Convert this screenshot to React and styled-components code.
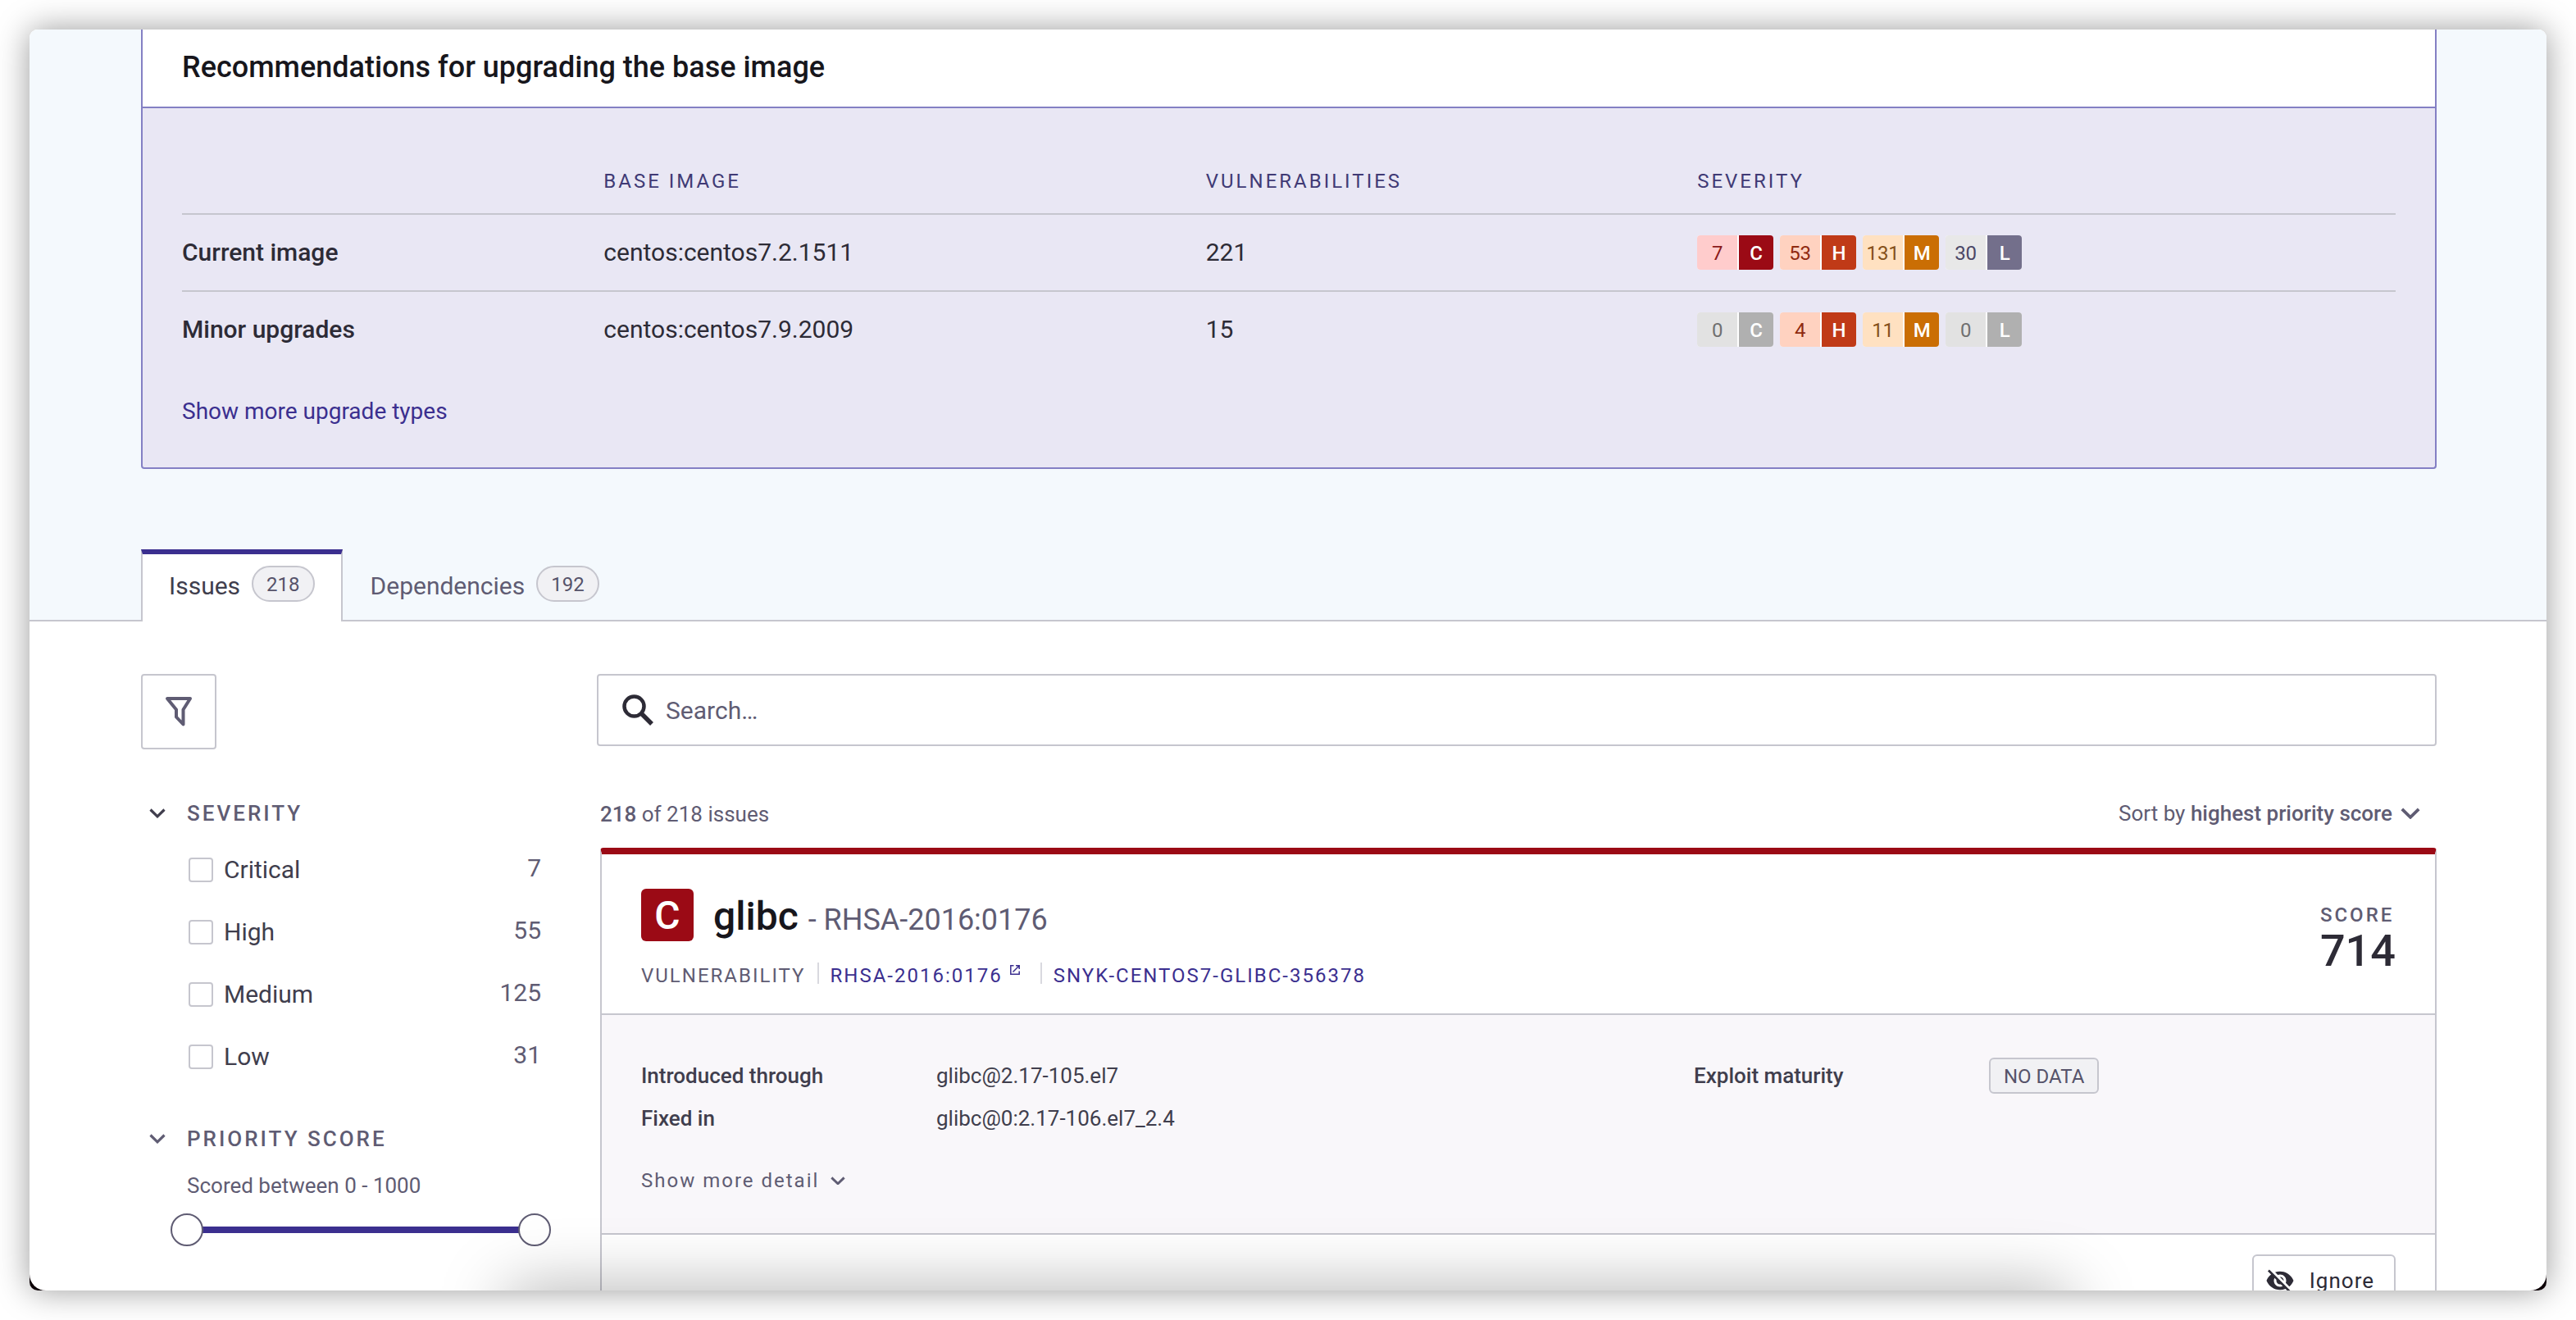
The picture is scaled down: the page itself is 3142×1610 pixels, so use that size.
import React, { useState } from "react";
import styled, { createGlobalStyle } from "styled-components";

const Global = createGlobalStyle`
  *, *::before, *::after { box-sizing: border-box; }
  body { margin: 0; background: #fff; font-family: Roboto, "Liberation Sans", sans-serif; color: #2d2b36; }
  button, input { font: inherit; color: inherit; }
  h1, h2, h3, p, dl, dd { margin: 0; }
`;

const line = "#c6c6ce";
const slate = "#5f5c73";
const violet = "#3b2f8f";

const Stage = styled.div`
  height: 100vh;
  padding: 36px;
  overflow: hidden;
`;

const Backing = styled.div`
  height: 100%;
  border-radius: 10px;
  background: linear-gradient(#f4f9fd 50%, #0d0207 50%);
  box-shadow: 0 0 40px rgba(0, 0, 0, 0.4);
`;

const Window = styled.div`
  position: relative;
  height: 100%;
  overflow: hidden;
  background: #fff;
  border-radius: 10px 10px 20px 20px;

  &::after {
    content: "";
    position: absolute;
    top: 100%;
    left: 19%;
    right: 19%;
    height: 60px;
    border-radius: 10px;
    box-shadow: 0 0 80px rgba(0, 0, 0, 0.34);
    pointer-events: none;
  }
`;

const Upper = styled.section`
  background: #f4f9fd;
  padding: 0 134px 0 136px;
`;

const Recommendation = styled.section`
  border: 2px solid #8480c4;
  border-top: 0;
  border-radius: 0 0 4px 4px;
  background: #e9e7f4;
`;

const RecTitle = styled.h2`
  padding: 24px 48px 26px;
  background: #fff;
  border-bottom: 2px solid #8480c4;
  color: #17161c;
  font-size: 36px;
  line-height: 44px;
  font-weight: 500;
`;

const RecBody = styled.div`
  padding: 78px 48px 46px;
`;

const Table = styled.table`
  width: 100%;
  table-layout: fixed;
  border-collapse: collapse;
  text-align: left;
  font-size: 30px;
  line-height: 44px;

  th, td { padding: 24px 0; }
  thead th {
    padding: 0 0 28px;
    color: #403a75;
    font-size: 24px;
    line-height: 22px;
    font-weight: 400;
    letter-spacing: 3px;
  }
  tbody tr { border-top: 2px solid ${line}; }
  tbody th { font-weight: 500; }
`;

const Col = styled.col`
  width: ${(p) => p.$w};
`;

const Badges = styled.div`
  display: flex;
  gap: 8px;
`;

const tones = {
  C: ["#ffcccc", "#8b1a1a", "#9b0a15"],
  H: ["#ffd2c0", "#8f2a10", "#c03a17"],
  M: ["#ffe1c1", "#84501a", "#ca6e04"],
  L: ["#e8e8e8", "#4b4766", "#736f8b"],
  none: ["#e2e2e2", "#707070", "#b0b0b0"],
};

const Badge = styled.span`
  display: grid;
  grid-template-columns: 49px 42px;
  gap: 2px;
  height: 42px;
  border-radius: 4px;
  overflow: hidden;
  background: #fff;
  font-size: 24px;
  line-height: 44px;
  text-align: center;

  span { background: ${(p) => tones[p.$tone][0]}; color: ${(p) => tones[p.$tone][1]}; }
  b { background: ${(p) => tones[p.$tone][2]}; color: #fff; font-weight: 500; }
`;

const MoreLink = styled.a`
  display: inline-block;
  margin-top: 32px;
  color: ${violet};
  font-size: 28px;
  line-height: 44px;
  text-decoration: none;
`;

const TabBar = styled.div`
  display: flex;
  margin: 98px -134px 0 -136px;
  padding-left: 136px;
  box-shadow: inset 0 -2px ${line};
`;

const Tab = styled.button`
  display: flex;
  align-items: center;
  gap: 14px;
  height: 88px;
  padding: 14px 32px 18px;
  border: 2px solid ${(p) => (p.$active ? line : "transparent")};
  border-top: 6px solid ${(p) => (p.$active ? violet : "transparent")};
  border-bottom: 0;
  background: ${(p) => (p.$active ? "#fff" : "transparent")};
  color: ${(p) => (p.$active ? "#403e4d" : slate)};
  font-size: 30px;
  line-height: 40px;
`;

const Pill = styled.span`
  align-self: flex-start;
  height: 44px;
  padding: 0 16px;
  border: 2px solid ${line};
  border-radius: 22px;
  background: #f1f1f4;
  color: #56536a;
  font-size: 24px;
  line-height: 42px;
`;

const Lower = styled.section`
  display: grid;
  grid-template-columns: 500px minmax(0, 1fr);
  column-gap: 56px;
  padding: 64px 134px 0 136px;
`;

const FilterButton = styled.button`
  display: grid;
  place-items: center;
  width: 92px;
  height: 92px;
  padding: 0;
  border: 2px solid ${line};
  border-radius: 4px;
  background: #fff;
`;

const Group = styled.section`
  margin-top: ${(p) => p.$top};
`;

const GroupTitle = styled.button`
  display: flex;
  align-items: center;
  gap: 26px;
  padding: 0 0 0 10px;
  border: 0;
  background: none;
  color: ${slate};
  font-size: 26px;
  line-height: 36px;
  font-weight: 500;
  letter-spacing: 3px;
`;

const Choices = styled.div`
  display: grid;
  gap: 36px;
  margin: 31px 0 0 58px;
  padding-right: 12px;
`;

const Choice = styled.label`
  display: flex;
  align-items: center;
  gap: 13px;
  color: #403e4d;
  font-size: 30px;
  line-height: 40px;
`;

const Count = styled.span`
  align-self: flex-start;
  margin-left: auto;
  color: ${slate};
  line-height: 36px;
`;

const Box = styled.input.attrs({ type: "checkbox" })`
  appearance: none;
  width: 30px;
  height: 30px;
  margin: 0;
  border: 2px solid ${line};
  border-radius: 4px;
  background: #fff;
  &:checked { background: ${violet}; }
`;

const Hint = styled.p`
  margin: 21px 0 16px 56px;
  color: ${slate};
  font-size: 26px;
  line-height: 36px;
`;

const Range = styled.div`
  display: grid;
  align-items: center;
  margin-left: 36px;
  height: 40px;

  &::before {
    content: "";
    grid-area: 1 / 1;
    height: 8px;
    margin: 0 20px;
    background: ${violet};
  }
`;

const Slider = styled.input.attrs({ type: "range", min: 0, max: 1000 })`
  grid-area: 1 / 1;
  appearance: none;
  width: 100%;
  height: 40px;
  margin: 0;
  background: none;
  pointer-events: none;

  &::-webkit-slider-thumb {
    appearance: none;
    width: 40px;
    height: 40px;
    border: 2px solid ${slate};
    border-radius: 50%;
    background: #fff;
    pointer-events: auto;
  }
`;

const SearchBox = styled.label`
  display: flex;
  align-items: center;
  gap: 14px;
  height: 88px;
  padding: 0 28px;
  border: 2px solid ${line};
  border-radius: 4px;
  background: #fff;
`;

const SearchInput = styled.input`
  flex: 1;
  min-width: 0;
  padding: 2px 0 0;
  border: 0;
  outline: 0;
  background: none;
  font-size: 30px;
  line-height: 40px;
  &::placeholder { color: ${slate}; opacity: 1; }
`;

const Results = styled.div`
  padding-left: 4px;
`;

const Summary = styled.div`
  display: flex;
  justify-content: space-between;
  align-items: center;
  height: 124px;
  padding: 42px 20px 0 0;
  color: ${slate};
  font-size: 26px;
  line-height: 36px;

  b { font-weight: 500; }
`;

const SortButton = styled.button`
  display: flex;
  align-items: center;
  gap: 10px;
  padding: 0 0 2px;
  border: 0;
  background: none;
  white-space: pre;
`;

const Issue = styled.article`
  border: 2px solid ${line};
  border-top: 8px solid #9b0a15;
  border-radius: 4px;
  background: #fff;
`;

const IssueHead = styled.header`
  display: flex;
  justify-content: space-between;
  height: 194px;
  padding: 42px 48px 0;
`;

const TitleRow = styled.div`
  display: flex;
  align-items: flex-start;
  gap: 24px;
  height: 64px;
`;

const SeverityMark = styled.span`
  width: 64px;
  height: 64px;
  border-radius: 6px;
  background: #9b0a15;
  color: #fff;
  font-size: 48px;
  line-height: 66px;
  font-weight: 500;
  text-align: center;
`;

const IssueTitle = styled.h3`
  color: #17161c;
  font-size: 48px;
  line-height: 68px;
  font-weight: 500;

  small { color: ${slate}; font-size: 36px; font-weight: 400; }
`;

const Refs = styled.div`
  display: flex;
  align-items: center;
  margin-top: 24px;
  color: ${slate};
  font-size: 24px;
  line-height: 36px;
  letter-spacing: 2px;
`;

const RefLink = styled.a`
  display: flex;
  gap: 8px;
  margin-left: 14px;
  padding-left: 16px;
  color: ${violet};
  text-decoration: none;
  background: linear-gradient(#d9d9df, #d9d9df) 0 2px / 2px 26px no-repeat;

  svg { margin: 4px 10px 0 0; }
`;

const Score = styled.div`
  padding-top: 18px;
  color: #2d2b36;
  font-size: 54px;
  line-height: 60px;
  font-weight: 500;

  span {
    display: block;
    color: ${slate};
    font-size: 24px;
    line-height: 28px;
    letter-spacing: 3px;
  }
`;

const Details = styled.div`
  border: solid ${line};
  border-width: 2px 0;
  background: #f9f7fa;
  padding: 48px 48px 0;
  height: 270px;
`;

const Facts = styled.dl`
  display: grid;
  grid-template-columns: 360px calc(60% - 360px) 360px minmax(0, 1fr);
  grid-auto-rows: 52px;
  align-items: center;
  color: #403e4d;
  font-size: 26px;
  line-height: 36px;

  dt { font-weight: 500; }
`;

const Tag = styled.span`
  display: block;
  width: fit-content;
  height: 44px;
  padding: 0 16px;
  border: 2px solid ${line};
  border-radius: 6px;
  background: #f1f1f4;
  color: #56536a;
  font-size: 24px;
  line-height: 42px;
`;

const DetailToggle = styled.button`
  display: flex;
  align-items: center;
  gap: 14px;
  margin-top: 32px;
  padding: 0;
  border: 0;
  background: none;
  color: ${slate};
  font-size: 24px;
  line-height: 36px;
  letter-spacing: 2px;
`;

const Actions = styled.footer`
  display: flex;
  justify-content: flex-end;
  padding: 24px 48px;
`;

const IgnoreButton = styled.button`
  display: flex;
  align-items: center;
  gap: 18px;
  height: 64px;
  padding: 0 24px 0 14px;
  border: 2px solid ${line};
  border-radius: 6px;
  background: #fff;
  color: #2d2b36;
  font-size: 26px;
  letter-spacing: 1px;
`;

const Chevron = ({ size = 20, color = "#403e4d" }) => (
  <svg width={size} height={size * 0.6} viewBox="0 0 20 12" fill="none" aria-hidden="true">
    <path d="M1.5 1.5 10 9.8l8.500-8.300" stroke={color} strokeWidth="3.200" />
  </svg>
);

const Funnel = () => (
  <svg width="34" height="38" viewBox="0 0 34 38" fill="none" aria-hidden="true">
    <path d="M3 3h28l-8.500 13.500v18l-8.500-9V16.500z" stroke={slate} strokeWidth="4" strokeLinejoin="round" />
  </svg>
);

const Magnifier = () => (
  <svg width="40" height="40" viewBox="0 0 40 40" fill="none" aria-hidden="true">
    <circle cx="15.500" cy="15.500" r="12" stroke="#2d2b36" strokeWidth="4.500" />
    <path d="m24.500 24.500 12.500 12.500" stroke="#2d2b36" strokeWidth="5.500" />
  </svg>
);

const External = () => (
  <svg width="14" height="14" viewBox="0 0 14 14" fill="none" stroke={violet} strokeWidth="1.500" aria-hidden="true">
    <path d="M5.500 1.800H1.800v10.400h10.400V8.500M8 1.800h4.200V6M12 2 4.500 9.500" />
  </svg>
);

const EyeOff = () => (
  <svg width="36" height="36" viewBox="0 0 24 24" fill="#2d2b36" aria-hidden="true">
    <path d="M12 7c2.760 0 5 2.240 5 5 0 .650-.130 1.260-.360 1.830l2.920 2.920c1.510-1.260 2.700-2.890 3.430-4.750-1.730-4.390-6-7.500-11-7.500-1.400 0-2.740.250-3.980.700l2.160 2.160C10.740 7.130 11.350 7 12 7zM2 4.270l2.280 2.280.460.460C3.080 8.300 1.780 10.020 1 12c1.730 4.390 6 7.500 11 7.500 1.550 0 3.030-.300 4.380-.840l.420.420L19.730 22 21 20.730 3.270 3 2 4.270zM7.530 9.800l1.550 1.550c-.050.210-.080.430-.080.650 0 1.660 1.340 3 3 3 .220 0 .440-.030.650-.080l1.550 1.550c-.670.330-1.410.530-2.200.530-2.760 0-5-2.240-5-5 0-.790.200-1.530.530-2.200zm4.310-.780 3.150 3.150.020-.160c0-1.660-1.340-3-3-3l-.170.010z" />
  </svg>
);

const images = [
  { name: "Current image", base: "centos:centos7.2.1511", total: 221, counts: { C: 7, H: 53, M: 131, L: 30 } },
  { name: "Minor upgrades", base: "centos:centos7.9.2009", total: 15, counts: { C: 0, H: 4, M: 11, L: 0 } },
];

const severities = [["Critical", 7], ["High", 55], ["Medium", 125], ["Low", 31]];

export default function App() {
  const [low, setLow] = useState(0);
  const [high, setHigh] = useState(1000);
  return (
    <>
      <Global />
      <Stage>
        <Backing>
          <Window>
            <Upper>
              <Recommendation>
                <RecTitle>Recommendations for upgrading the base image</RecTitle>
                <RecBody>
                  <Table>
                    <colgroup>
                      <Col $w="19.05%" /><Col $w="27.2%" /><Col $w="22.2%" /><Col />
                    </colgroup>
                    <thead>
                      <tr><th></th><th>BASE IMAGE</th><th>VULNERABILITIES</th><th>SEVERITY</th></tr>
                    </thead>
                    <tbody>
                      {images.map((i) => (
                        <tr key={i.name}>
                          <th>{i.name}</th>
                          <td>{i.base}</td>
                          <td>{i.total}</td>
                          <td>
                            <Badges>
                              {Object.entries(i.counts).map(([k, n]) => (
                                <Badge key={k} $tone={n ? k : "none"}><span>{n}</span><b>{k}</b></Badge>
                              ))}
                            </Badges>
                          </td>
                        </tr>
                      ))}
                    </tbody>
                  </Table>
                  <MoreLink href="#upgrades">Show more upgrade types</MoreLink>
                </RecBody>
              </Recommendation>
              <TabBar>
                <Tab $active>Issues <Pill>218</Pill></Tab>
                <Tab>Dependencies <Pill>192</Pill></Tab>
              </TabBar>
            </Upper>
            <Lower>
              <aside>
                <FilterButton aria-label="Filters"><Funnel /></FilterButton>
                <Group $top="60px">
                  <GroupTitle><Chevron />SEVERITY</GroupTitle>
                  <Choices>
                    {severities.map(([name, n]) => (
                      <Choice key={name}><Box /><span>{name}</span><Count>{n}</Count></Choice>
                    ))}
                  </Choices>
                </Group>
                <Group $top="62px">
                  <GroupTitle><Chevron color={slate} />PRIORITY SCORE</GroupTitle>
                  <Hint>Scored between {low} - {high}</Hint>
                  <Range>
                    <Slider aria-label="Lowest score" value={low} onChange={(e) => setLow(Math.min(+e.target.value, high))} />
                    <Slider aria-label="Highest score" value={high} onChange={(e) => setHigh(Math.max(+e.target.value, low))} />
                  </Range>
                </Group>
              </aside>
              <main>
                <SearchBox>
                  <Magnifier />
                  <SearchInput type="text" aria-label="Search issues" placeholder="Search…" />
                </SearchBox>
                <Results>
                  <Summary>
                    <p><b>218</b> of 218 issues</p>
                    <SortButton><span>Sort by <b>highest priority score</b></span><Chevron size={24} color={slate} /></SortButton>
                  </Summary>
                  <Issue>
                    <IssueHead>
                      <div>
                        <TitleRow>
                          <SeverityMark>C</SeverityMark>
                          <IssueTitle>glibc <small>- RHSA-2016:0176</small></IssueTitle>
                        </TitleRow>
                        <Refs>
                          <span>VULNERABILITY</span>
                          <RefLink href="#rhsa">RHSA-2016:0176 <External /></RefLink>
                          <RefLink href="#snyk">SNYK-CENTOS7-GLIBC-356378</RefLink>
                        </Refs>
                      </div>
                      <Score><span>SCORE</span>714</Score>
                    </IssueHead>
                    <Details>
                      <Facts>
                        <dt>Introduced through</dt><dd>glibc@2.17-105.el7</dd>
                        <dt>Exploit maturity</dt><dd><Tag>NO DATA</Tag></dd>
                        <dt>Fixed in</dt><dd>glibc@0:2.17-106.el7_2.4</dd>
                      </Facts>
                      <DetailToggle>Show more detail <Chevron size={18} color={slate} /></DetailToggle>
                    </Details>
                    <Actions>
                      <IgnoreButton><EyeOff />Ignore</IgnoreButton>
                    </Actions>
                  </Issue>
                </Results>
              </main>
            </Lower>
          </Window>
        </Backing>
      </Stage>
    </>
  );
}
